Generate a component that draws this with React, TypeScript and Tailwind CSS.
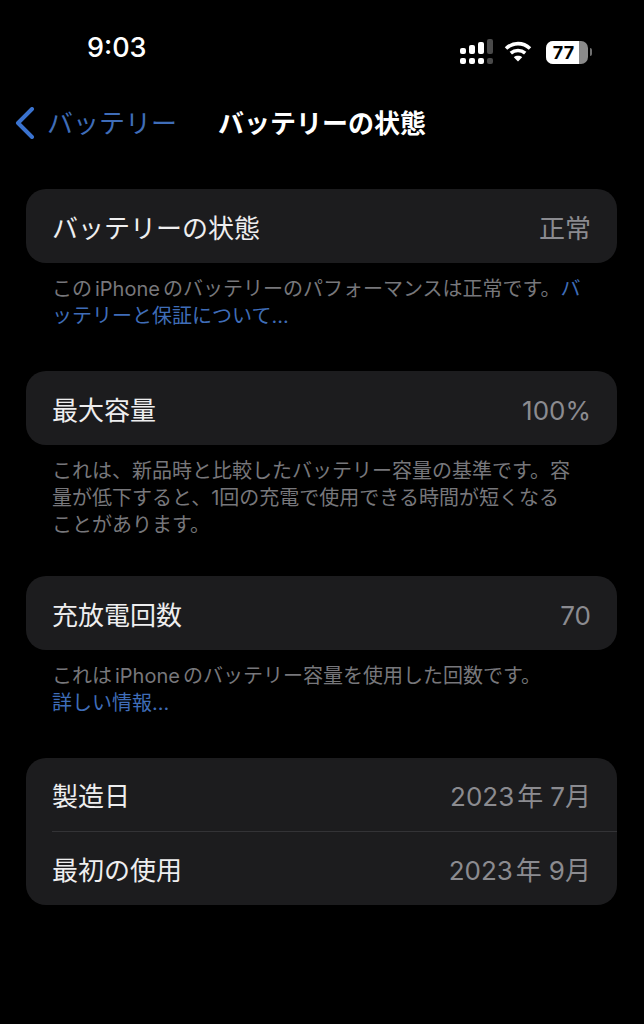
const font = { fontFamily: '"Inter", "Noto Sans CJK JP", sans-serif' };

function CellularIcon() {
  return (
    <svg width="34" height="26" viewBox="0 0 34 26" fill="#fff">
      <rect x="0" y="9" width="6" height="6" rx="2" />
      <rect x="9" y="6" width="6" height="9" rx="2" />
      <rect x="18" y="3" width="6" height="12" rx="2" />
      <rect x="27" y="0" width="6" height="15" rx="2" fill="#4a4a4a" />
      <rect x="0" y="19" width="6" height="6" rx="2" />
      <rect x="9" y="19" width="6" height="6" rx="2" />
      <rect x="18" y="19" width="6" height="6" rx="2" />
      <rect x="27" y="19" width="6" height="6" rx="2" fill="#4a4a4a" />
    </svg>
  );
}

function WifiIcon() {
  return (
    <svg width="28" height="22" viewBox="0 0 28 22" fill="none" stroke="#fff" strokeWidth="3.6">
      <path d="M2 7.5 C9 1 19 1 26 7.5" />
      <path d="M6.8 12.2 C11 8.6 17 8.6 21.2 12.2" />
      <path d="M14 20.5 L9.8 16.2 C12 14.4 16 14.4 18.2 16.2 Z" fill="#fff" stroke="none" />
    </svg>
  );
}

function BatteryIcon() {
  return (
    <div className="flex items-center gap-[2px]">
      <div className="flex h-[23px] w-[42px] overflow-hidden rounded-[7px] bg-[#8a8a8a]">
        <div className="flex w-[33px] items-center justify-center bg-white pl-[2px] text-[18px] font-bold text-black">
          77
        </div>
      </div>
      <div className="h-[8px] w-[2px] rounded-r-full bg-[#6f6f6f]" />
    </div>
  );
}

function Row({ label, value, tall }: { label: string; value: React.ReactNode; tall?: boolean }) {
  return (
    <div className={tall ? "flex h-[74px] items-center justify-between pl-[26px] pr-[26px] pt-[4px]" : "flex h-[73px] items-center justify-between pl-[26px] pr-[26px] pt-[4px]"}>
      <span className="text-[26px] text-[#eeeeef]">{label}</span>
      <span className="text-[26px] text-[#8b8b90]">{value}</span>
    </div>
  );
}

function YearMonth({ month }: { month: string }) {
  return (
    <>
      2023<span className="mx-[3px]">年</span>
      <span className="ml-[4px]">{month}月</span>
    </>
  );
}

export default function App() {
  return (
    <div style={font} className="h-[1024px] w-[644px] overflow-hidden bg-black">
      <div className="flex h-[96px] items-end justify-between pb-[31px] pl-[87px] pr-[52px]">
        <span className="text-[27px] leading-[34px] font-medium text-white">9:03</span>
        <div className="flex items-center">
          <CellularIcon />
          <div className="ml-[10px] mr-[14px]">
            <WifiIcon />
          </div>
          <BatteryIcon />
        </div>
      </div>

      <div className="grid h-[54px] grid-cols-[1fr_auto_1fr] items-center">
        <div className="flex items-center gap-[12px] pl-[15px]">
          <svg width="20" height="32" viewBox="0 0 20 32" fill="none" stroke="#3a73d0" strokeWidth="4" strokeLinecap="round" strokeLinejoin="round">
            <path d="M17 2 L3 16 L17 30" />
          </svg>
          <span className="text-[26px] text-[#3f6db8]">バッテリー</span>
        </div>
        <span className="text-[26px] font-semibold text-white">バッテリーの状態</span>
        <div />
      </div>

      <div className="flex flex-col pl-[26px] pr-[27px] pt-[39px]">
        <div className="rounded-[20px] bg-[#1c1c1e]">
          <Row tall label="バッテリーの状態" value="正常" />
        </div>
        <p className="h-[108px] whitespace-nowrap pl-[26px] pt-[13px] text-[20px] leading-[27px] text-[#77777b]">
          この<span className="mx-[3px]">iPhone</span>のバッテリーのパフォーマンスは正常です。<span className="text-[#3f6db8]">バ</span>
          <br />
          <span className="text-[#3f6db8]">ッテリーと保証について...</span>
        </p>

        <div className="rounded-[20px] bg-[#1c1c1e]">
          <Row tall label="最大容量" value="100%" />
        </div>
        <p className="h-[131px] whitespace-nowrap pl-[26px] pt-[13px] text-[20px] leading-[27px] text-[#77777b]">
          これは、新品時と比較したバッテリー容量の基準です。容
          <br />
          量が低下すると、1回の充電で使用できる時間が短くなる
          <br />
          ことがあります。
        </p>

        <div className="rounded-[20px] bg-[#1c1c1e]">
          <Row tall label="充放電回数" value="70" />
        </div>
        <p className="h-[108px] whitespace-nowrap pl-[26px] pt-[13px] text-[20px] leading-[27px] text-[#77777b]">
          これは<span className="mx-[3px]">iPhone</span>のバッテリー容量を使用した回数です。
          <br />
          <span className="text-[#3f6db8]">詳しい情報...</span>
        </p>

        <div className="rounded-[20px] bg-[#1c1c1e]">
          <Row label="製造日" value={<YearMonth month="7" />} />
          <div className="ml-[26px] h-px bg-[#333336]" />
          <Row label="最初の使用" value={<YearMonth month="9" />} />
        </div>
      </div>
    </div>
  );
}
